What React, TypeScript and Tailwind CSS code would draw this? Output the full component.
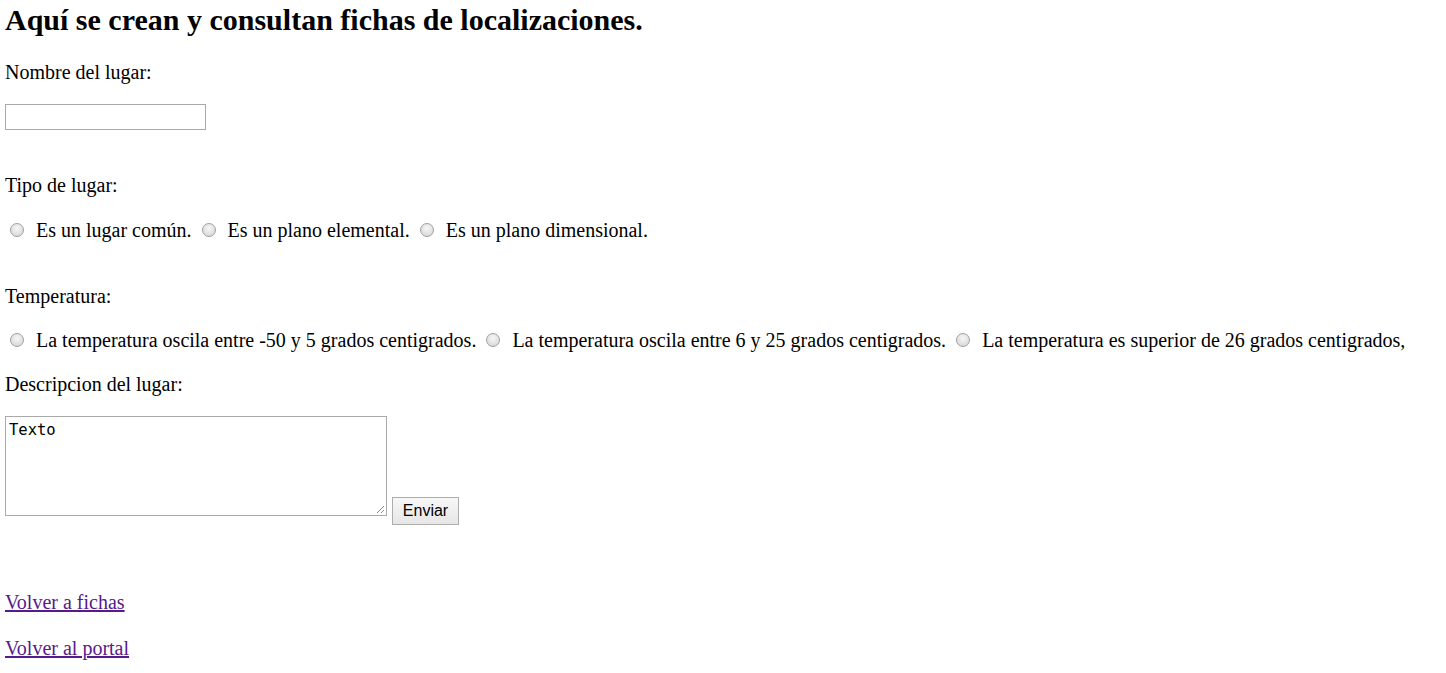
import React from "react";

function Radio() {
  return (
    <span className="inline-block w-[14px] h-[14px] rounded-full border border-[#a0a0a0] bg-[radial-gradient(circle_at_50%_35%,#f6f6f6,#d2d2d2)] ml-[5px] mr-[12px] align-[0px]" />
  );
}

export default function App() {
  return (
    <div className="bg-white min-h-[673px] pl-[5px] pt-[3px] text-black font-['Liberation_Serif',serif] text-[20px] leading-[23px]">
      <h1 className="text-[30px] leading-[34px] font-bold">Aquí se crean y consultan fichas de localizaciones.</h1>
      <p className="mt-[24px]">Nombre del lugar:</p>
      <div className="mt-[20px] w-[201px] h-[26px] border border-[#a9a9a9] bg-white" />
      <p className="mt-[44px]">Tipo de lugar:</p>
      <p className="mt-[22px] whitespace-pre">
        <Radio />Es un lugar común. <Radio />Es un plano elemental. <Radio />Es un plano dimensional.
      </p>
      <p className="mt-[43px]">Temperatura:</p>
      <p className="mt-[21px] whitespace-pre">
        <Radio />La temperatura oscila entre -50 y 5 grados centigrados. <Radio />La temperatura oscila entre 6 y 25 grados centigrados. <Radio />La temperatura es superior de 26 grados centigrados,
      </p>
      <p className="mt-[21px]">Descripcion del lugar:</p>
      <div className="mt-[20px] flex items-start">
        <div className="relative w-[382px] h-[100px] border border-[#a9a9a9] bg-white px-[3px] pt-[4px] font-['DejaVu_Sans_Mono',monospace] text-[15.5px] leading-[18px]">
          Texto
          <svg className="absolute right-[1px] bottom-[1px]" width="10" height="10" viewBox="0 0 10 10">
            <line x1="9" y1="2" x2="2" y2="9" stroke="#888" strokeWidth="1" />
            <line x1="9" y1="6" x2="6" y2="9" stroke="#888" strokeWidth="1" />
          </svg>
        </div>
        <div className="ml-[5px] mt-[81px] w-[67px] h-[28px] border border-[#adadad] bg-[linear-gradient(#f7f7f7,#e6e6e6)] flex items-center justify-center font-['Liberation_Sans',sans-serif] text-[16px] leading-[18px]">
          Enviar
        </div>
      </div>
      <p className="mt-[66px]">
        <a className="text-[#551a8b] underline">Volver a fichas</a>
      </p>
      <p className="mt-[23px]">
        <a className="text-[#551a8b] underline">Volver al portal</a>
      </p>
    </div>
  );
}
